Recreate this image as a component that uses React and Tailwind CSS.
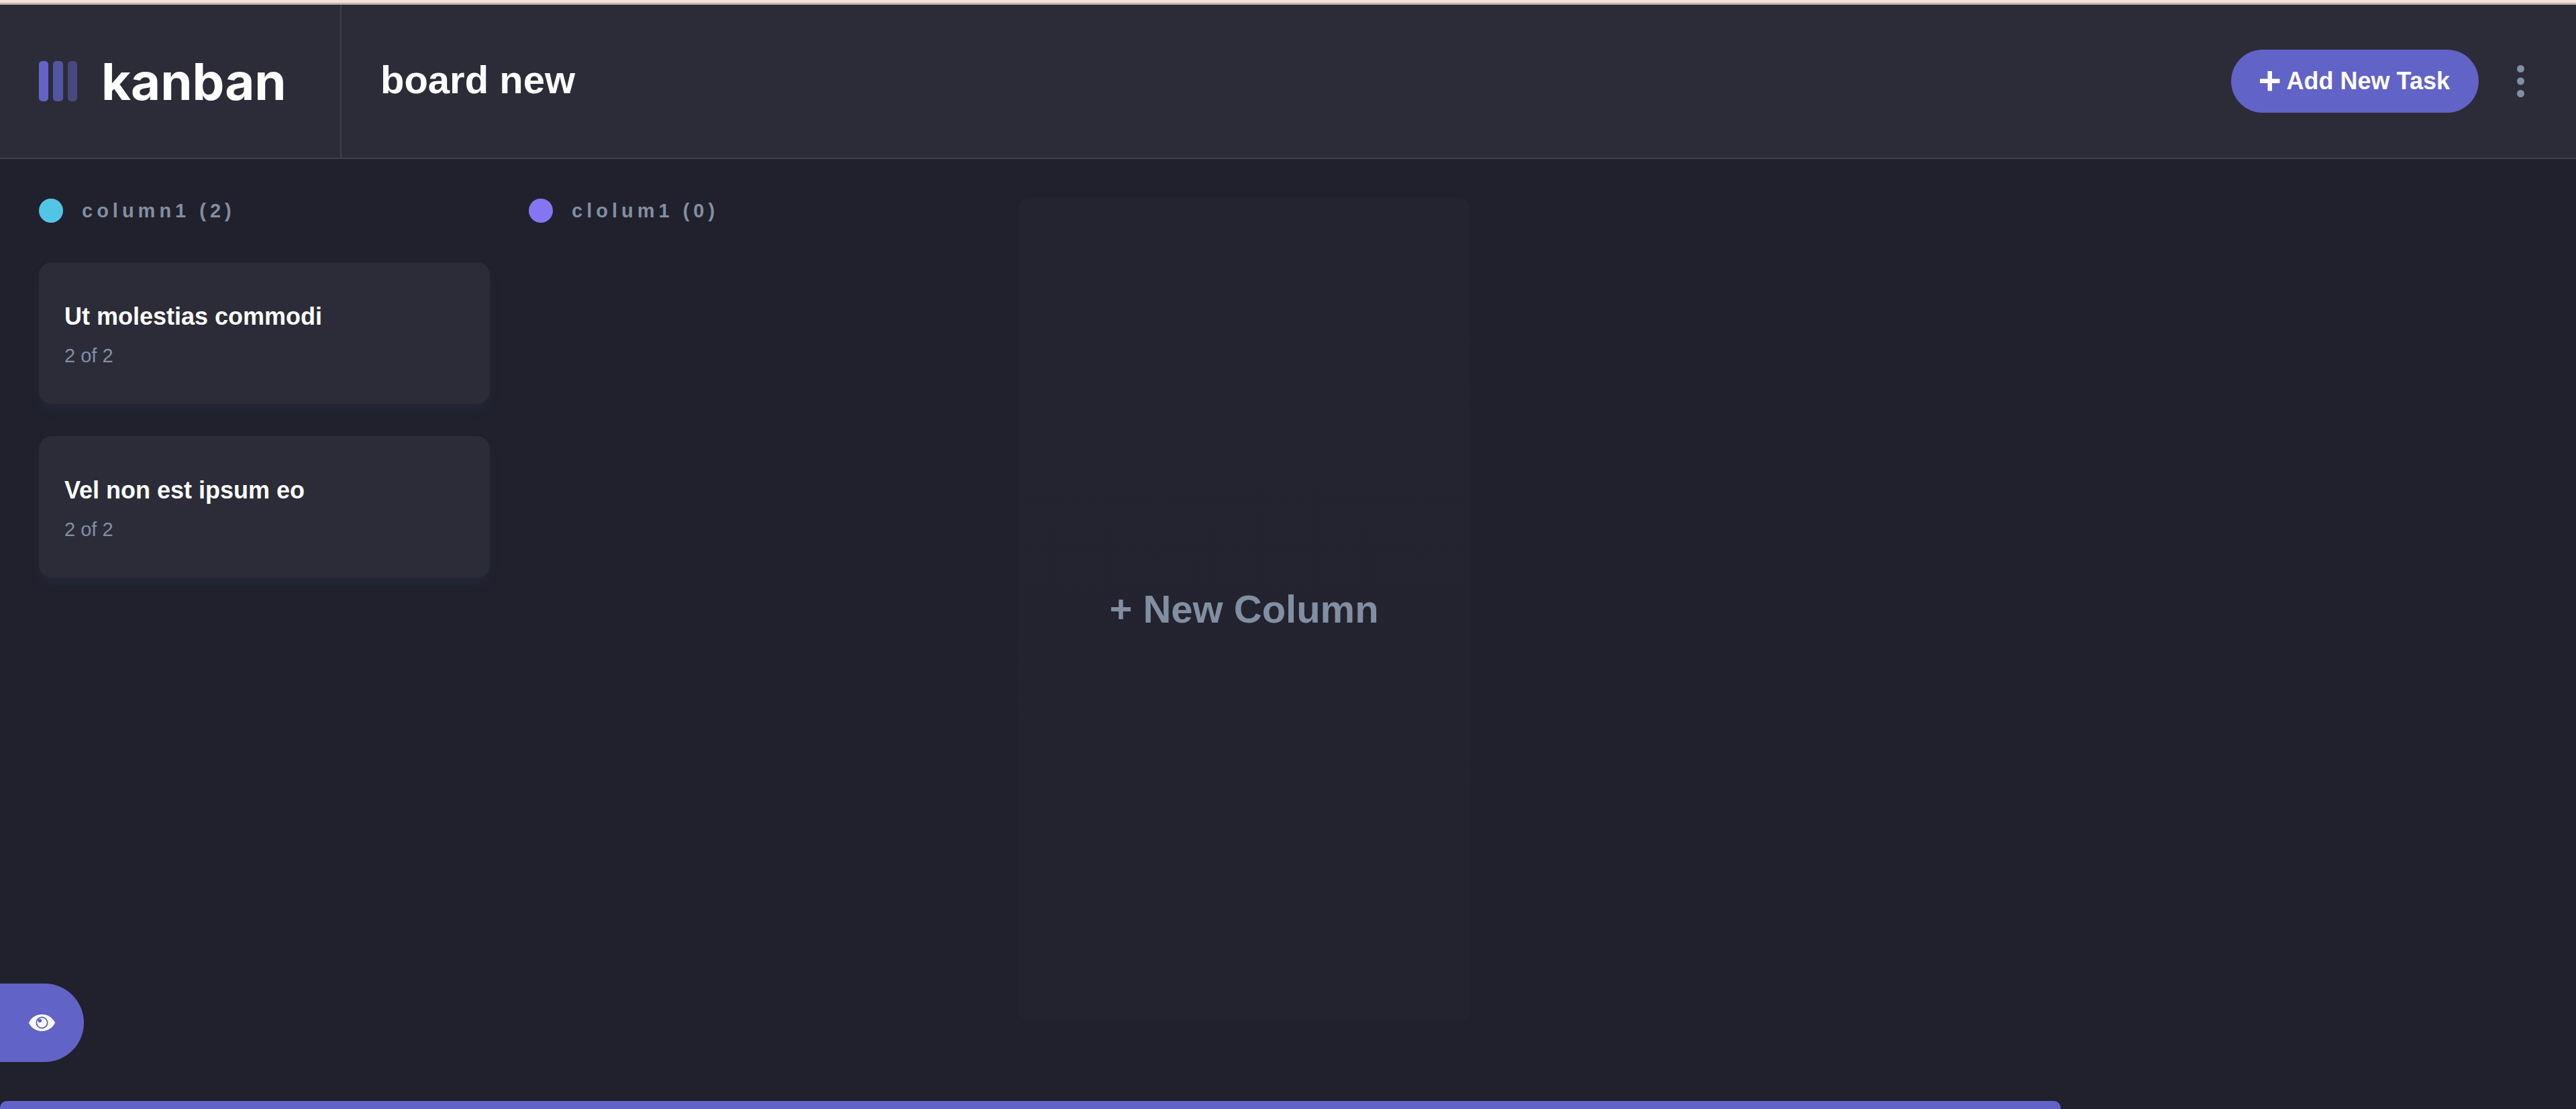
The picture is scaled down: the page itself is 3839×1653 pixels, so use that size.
import React from "react";

const columns = [
  {
    name: "column1",
    dot: "bg-[#51c5e6]",
    tasks: [
      { title: "Ut molestias commodi", progress: "2 of 2" },
      { title: "Vel non est ipsum eo", progress: "2 of 2" },
    ],
  },
  { name: "clolum1", dot: "bg-[#8476f3]", tasks: [] },
];

function Logo() {
  return (
    <div className="flex w-[509px] shrink-0 items-center border-r-2 border-[#3e3f4e] pl-[58px]">
      <svg width="57" height="60" viewBox="0 0 57 60" aria-hidden="true">
        <rect width="14" height="60" rx="5" fill="#6163c7" />
        <rect x="21" width="15" height="60" rx="5" fill="#6163c7" opacity="0.75" />
        <rect x="43" width="14" height="60" rx="5" fill="#6163c7" opacity="0.5" />
      </svg>
      <span className="ml-[36px] font-[Inter,sans-serif] text-[76px] leading-none font-bold">kanban</span>
    </div>
  );
}

function EyeIcon() {
  return (
    <svg width="39" height="25" viewBox="0 0 39 25" aria-hidden="true">
      <path
        d="M0.4 13.6Q-0.2 12.5 0.4 11.4C4.2 4.4 11.2 0 19.5 0S34.8 4.4 38.6 11.4Q39.2 12.5 38.6 13.6C34.8 20.6 27.8 25 19.5 25S4.2 20.6 0.4 13.6z"
        fill="#fff"
      />
      <circle cx="19.5" cy="12.4" r="8.1" fill="none" stroke="#6163c7" strokeWidth="1.9" />
      <circle cx="16.3" cy="9.2" r="2.8" fill="#6163c7" />
    </svg>
  );
}

function Header() {
  return (
    <header className="flex h-[230px] shrink-0 border-b-2 border-[#3e3f4e] bg-[#2b2c37]">
      <Logo />
      <div className="flex grow items-center justify-between px-[58px]">
        <h1 className="pb-[4px] text-[58px] leading-none font-bold">board new</h1>
        <div className="flex items-center gap-[38px]">
          <button className="flex h-[94px] items-center gap-[10px] rounded-full bg-[#6163c7] px-[43px] text-[36px] leading-none font-bold">
            <svg width="30" height="30" viewBox="0 0 30 30" fill="currentColor" aria-hidden="true">
              <path d="M11.5 0h6.5v11.5h11.5v6.5H18v11.5h-6.5V18H0v-6.5h11.5z" />
            </svg>
            Add New Task
          </button>
          <button aria-label="Board options" className="flex px-[19px]">
            <svg width="11" height="48" viewBox="0 0 11 48" fill="#828fa3" aria-hidden="true">
              <circle cx="5.5" cy="5.5" r="5.5" />
              <circle cx="5.5" cy="24" r="5.5" />
              <circle cx="5.5" cy="42.5" r="5.5" />
            </svg>
          </button>
        </div>
      </div>
    </header>
  );
}

function Column({ name, dot, tasks }) {
  return (
    <section className="w-[672px] shrink-0">
      <h2 className="flex h-[38px] items-center gap-[28px] text-[29px] leading-none font-bold tracking-[6px] text-[#828fa3]">
        <span className={`size-[36px] rounded-full ${dot}`} />
        {name} ({tasks.length})
      </h2>
      <div className="mt-[58px] flex flex-col gap-[48px]">
        {tasks.map((t) => (
          <article
            key={t.title}
            className="h-[211px] rounded-[19px] bg-[#2b2c37] px-[38px] pt-[60px] shadow-[0_10px_14px_rgba(44,78,126,0.13)]"
          >
            <h3 className="text-[36px] leading-[42px] font-bold">{t.title}</h3>
            <p className="mt-[20px] text-[29px] leading-[34px] text-[#828fa3]">{t.progress}</p>
          </article>
        ))}
      </div>
    </section>
  );
}

export default function App() {
  return (
    <div className="flex h-screen flex-col overflow-hidden bg-[#20212c] font-['Liberation_Sans',Arial,sans-serif] text-white">
      <div className="h-[7px] shrink-0 border-b-[3px] border-[#c7b6b2] bg-[#f4e1d8]" />
      <Header />
      <main className="relative flex grow gap-[58px] px-[58px] pt-[58px] pb-[120px]">
        {columns.map((c) => (
          <Column key={c.name} {...c} />
        ))}
        <button className="w-[672px] shrink-0 rounded-[14px] bg-linear-to-b from-[#23242f] to-[#22232e] text-[58px] leading-none font-bold text-[#828fa3]">
          + New Column
        </button>
        <button
          aria-label="Show sidebar"
          className="absolute bottom-[58px] left-0 flex h-[117px] w-[125px] items-center rounded-r-full bg-[#6163c7] pl-[43px]"
        >
          <EyeIcon />
        </button>
      </main>
      <div className="h-[12px] shrink-0">
        <div className="h-full w-4/5 rounded-t-[10px] bg-[#6163c7]" />
      </div>
    </div>
  );
}
